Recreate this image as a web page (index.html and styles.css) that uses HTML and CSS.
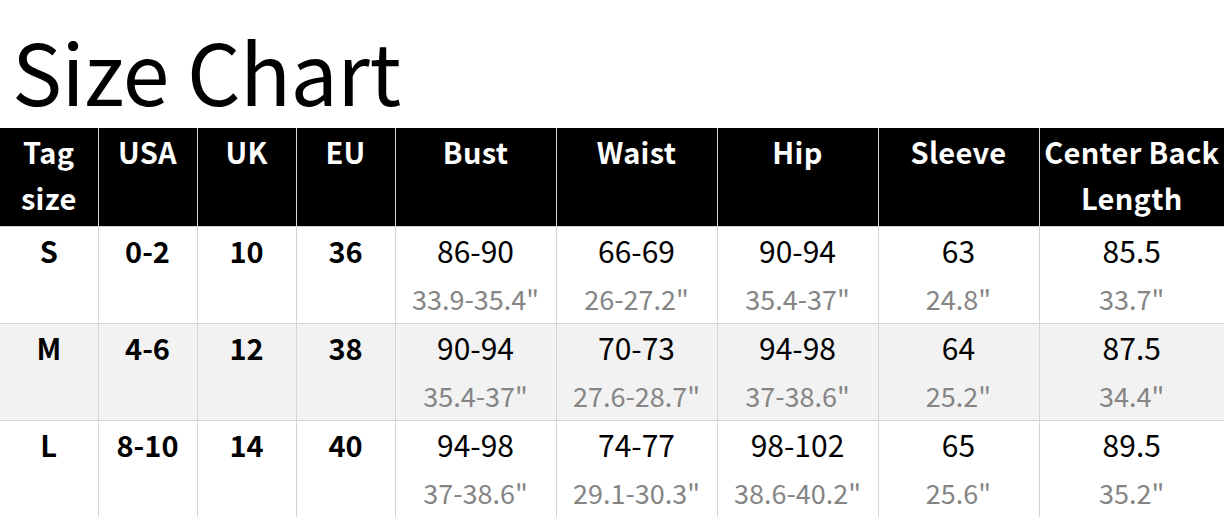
FILE: index.html
```html
<!DOCTYPE html>
<html>
<head>
<meta charset="utf-8">
<link rel="stylesheet" href="styles.css">
</head>
<body>
<div class="page">
  <h1 class="title">Size Chart</h1>
  <table class="chart">
    <colgroup>
      <col class="c-first"><col class="c-sm"><col class="c-sm"><col class="c-sm">
      <col class="c-md"><col class="c-md"><col class="c-md"><col class="c-md">
      <col class="c-lg">
    </colgroup>
    <thead>
      <tr>
        <th>Tag<br>size</th><th>USA</th><th>UK</th><th>EU</th><th>Bust</th><th>Waist</th><th>Hip</th><th>Sleeve</th><th>Center Back<br>Length</th>
      </tr>
    </thead>
    <tbody>
      <tr>
        <td class="b">S</td><td class="b">0-2</td><td class="b">10</td><td class="b">36</td>
        <td>86-90<br><span class="in">33.9-35.4"</span></td>
        <td>66-69<br><span class="in">26-27.2"</span></td>
        <td>90-94<br><span class="in">35.4-37"</span></td>
        <td>63<br><span class="in">24.8"</span></td>
        <td>85.5<br><span class="in">33.7"</span></td>
      </tr>
      <tr class="alt">
        <td class="b">M</td><td class="b">4-6</td><td class="b">12</td><td class="b">38</td>
        <td>90-94<br><span class="in">35.4-37"</span></td>
        <td>70-73<br><span class="in">27.6-28.7"</span></td>
        <td>94-98<br><span class="in">37-38.6"</span></td>
        <td>64<br><span class="in">25.2"</span></td>
        <td>87.5<br><span class="in">34.4"</span></td>
      </tr>
      <tr>
        <td class="b">L</td><td class="b">8-10</td><td class="b">14</td><td class="b">40</td>
        <td>94-98<br><span class="in">37-38.6"</span></td>
        <td>74-77<br><span class="in">29.1-30.3"</span></td>
        <td>98-102<br><span class="in">38.6-40.2"</span></td>
        <td>65<br><span class="in">25.6"</span></td>
        <td>89.5<br><span class="in">35.2"</span></td>
      </tr>
    </tbody>
  </table>
</div>
</body>
</html>
```
FILE: styles.css
```css
html, body {
  margin: 0;
  padding: 0;
  background: #fff;
}
body {
  width: 1224px;
  height: 518px;
  overflow: hidden;
  font-family: "Noto Sans CJK SC", "Noto Sans", sans-serif;
  color: #000;
}
.page {
  display: flex;
  flex-direction: column;
}
.title {
  margin: 0;
  height: 128px;
  padding: 0 0 0 12px;
  font-size: 84px;
  font-weight: 400;
  line-height: 140px;
  box-sizing: border-box;
  letter-spacing: -0.5px;
  white-space: nowrap;
}
.chart {
  border-collapse: collapse;
  table-layout: fixed;
  width: 1224px;
  text-align: center;
}
.c-first { width: 98px; }
.c-sm { width: 99px; }
.c-md { width: 161px; }
.c-lg { width: 185px; }
.chart th, .chart td {
  padding: 0;
  vertical-align: top;
  line-height: 48px;
  white-space: nowrap;
  overflow: hidden;
}
.chart th {
  background: #000;
  color: #fff;
  font-size: 29px;
  font-weight: 700;
  height: 96px;
  line-height: 46px;
  padding-bottom: 2px;
  border-left: 1px solid #d8d8d8;
  letter-spacing: 0.3px;
}
.chart th:first-child { border-left: none; }
.chart td {
  height: 96px;
  font-size: 30px;
  line-height: 46px;
  border-left: 1px solid #d4d4d4;
  border-top: 1px solid #d4d4d4;
}
.chart td:first-child { border-left: none; }
.chart td.b {
  font-weight: 700;
  font-size: 29px;
}
.chart tr.alt td { background: #f2f2f2; }
.in {
  display: inline-block;
  margin-top: 3px;
  line-height: 46px;
  color: #858585;
  font-size: 27px;
}
```
